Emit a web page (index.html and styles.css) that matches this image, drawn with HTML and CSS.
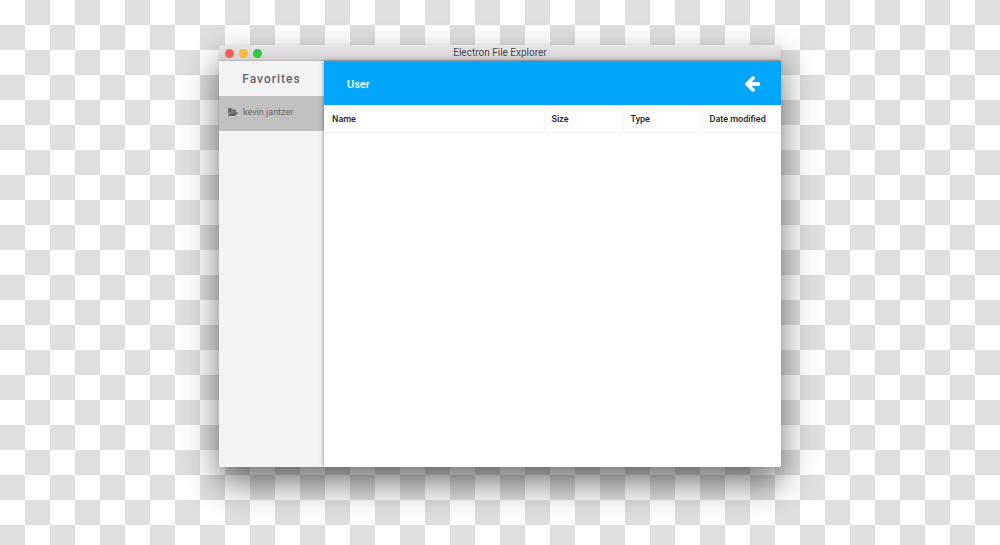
FILE: index.html
```html
<!DOCTYPE html>
<html lang="en">
<head>
<meta charset="utf-8">
<title>Electron File Explorer</title>
<link rel="stylesheet" href="styles.css">
</head>
<body>
<div class="window">
  <header class="titlebar">
    <div class="controls">
      <button class="dot close" aria-label="Close"></button>
      <button class="dot minimize" aria-label="Minimize"></button>
      <button class="dot zoom" aria-label="Zoom"></button>
    </div>
    <h1 class="title">Electron File Explorer</h1>
  </header>
  <div class="content">
    <nav class="sidebar">
      <h2 class="sidebar-title">Favorites</h2>
      <a class="favorite" href="#">
        <svg class="folder" viewBox="0 128 1815 1408" aria-hidden="true"><path d="M1815 952q0 31-31 66l-336 396q-43 51-120.500 86.500t-143.500 35.500h-1088q-34 0-60.500-13t-26.500-43q0-31 31-66l336-396q43-51 120.500-86.500t143.500-35.500h1088q34 0 60.500 13t26.500 43zm-343-344v160h-832q-94 0-197 47.500t-164 119.500l-337 396-5 6q0-4-.5-12.500t-.5-12.500v-960q0-92 66-158t158-66h320q92 0 158 66t66 158v32h544q92 0 158 66t66 158z"/></svg>
        <span>kevin.jantzer</span>
      </a>
    </nav>
    <main class="main">
      <div class="toolbar">
        <h2 class="location">User</h2>
        <button class="back" aria-label="Back">
          <svg class="arrow" viewBox="64 -75 1472 1558" aria-hidden="true"><path d="M1536 640v128q0 53-32.500 90.500t-84.500 37.500h-704l293 294q38 36 38 90t-38 90l-75 76q-37 37-90 37-52 0-91-37l-651-652q-37-37-37-90 0-52 37-91l651-650q38-38 91-38 52 0 90 38l75 74q38 38 38 91t-38 91l-293 293h704q52 0 84.500 37.500t32.500 90.500z"/></svg>
        </button>
      </div>
      <table class="files">
        <thead>
          <tr><th class="name">Name</th><th>Size</th><th>Type</th><th>Date modified</th></tr>
        </thead>
      </table>
    </main>
  </div>
</div>
</body>
</html>
```
FILE: styles.css
```css
* { box-sizing: border-box; }

body {
  display: flex;
  min-height: 100vh;
  margin: 0;
  padding: 45px 219px 78px;
  font-family: Roboto, "Liberation Sans", sans-serif;
  background: repeating-conic-gradient(#dfdfdf 0 25%, #fff 0 50%) 0 0 / 50px 50px;
}

.window {
  display: flex;
  flex: 1;
  flex-direction: column;
  overflow: hidden;
  border-radius: 3px 3px 2px 2px;
  background: #fff;
  box-shadow: 0 0 1px rgba(0, 0, 0, 0.3), 0 16px 34px rgba(0, 0, 0, 0.55);
}

.titlebar {
  display: grid;
  grid-template-columns: 1fr auto 1fr;
  align-items: center;
  height: 16px;
  padding: 1px 6px 0;
  border-bottom: 1px solid #b8b8b8;
  background: linear-gradient(#e8e6e8, #d2d0d2);
}

.controls { display: flex; gap: 5px; }

.dot {
  width: 9px;
  height: 9px;
  padding: 0;
  border: 0;
  border-radius: 50%;
}

.close { background: #f95e57; }
.minimize { background: #fbbb3c; }
.zoom { background: #2fc73f; }

.title {
  margin: 0;
  color: #4a484a;
  font-size: 10px;
  font-weight: 400;
  line-height: 14px;
}

.content { display: flex; flex: 1; }

.sidebar {
  width: 105px;
  background: #f4f4f4;
}

.sidebar-title {
  margin: 0;
  padding-top: 1px;
  color: #666;
  font-size: 12px;
  font-weight: 500;
  letter-spacing: 1px;
  line-height: 34px;
  text-align: center;
}

.favorite {
  display: flex;
  align-items: center;
  gap: 5px;
  height: 35px;
  padding: 0 9px 4px;
  background: #c1c1c1;
  color: #666;
  font-size: 9px;
  text-decoration: none;
}

.folder { width: 10px; height: 8px; fill: currentColor; }

.main {
  z-index: 1;
  flex: 1;
  background: #fff;
  box-shadow: 0 0 4px rgba(0, 0, 0, 0.5);
}

.toolbar {
  display: flex;
  align-items: center;
  justify-content: space-between;
  height: 44px;
  padding: 2px 21px 0 23px;
  background: #02a7fb;
  color: #fff;
}

.location { margin: 0; font-size: 11px; font-weight: 500; }

.back {
  display: flex;
  padding: 0;
  border: 0;
  background: none;
  color: inherit;
}

.arrow { width: 15px; height: 16px; fill: currentColor; }

.files {
  width: 100%;
  border-collapse: collapse;
  table-layout: fixed;
}

.files th {
  width: 79px;
  height: 27px;
  padding: 1px 7px 0;
  border-right: 1px solid #f5f5f5;
  border-bottom: 1px solid #f5f5f5;
  color: #222;
  font-size: 9px;
  font-weight: 500;
  text-align: left;
  white-space: nowrap;
}

.files .name { width: auto; padding-left: 8px; }
.files th:last-child { border-right: 0; }
```
